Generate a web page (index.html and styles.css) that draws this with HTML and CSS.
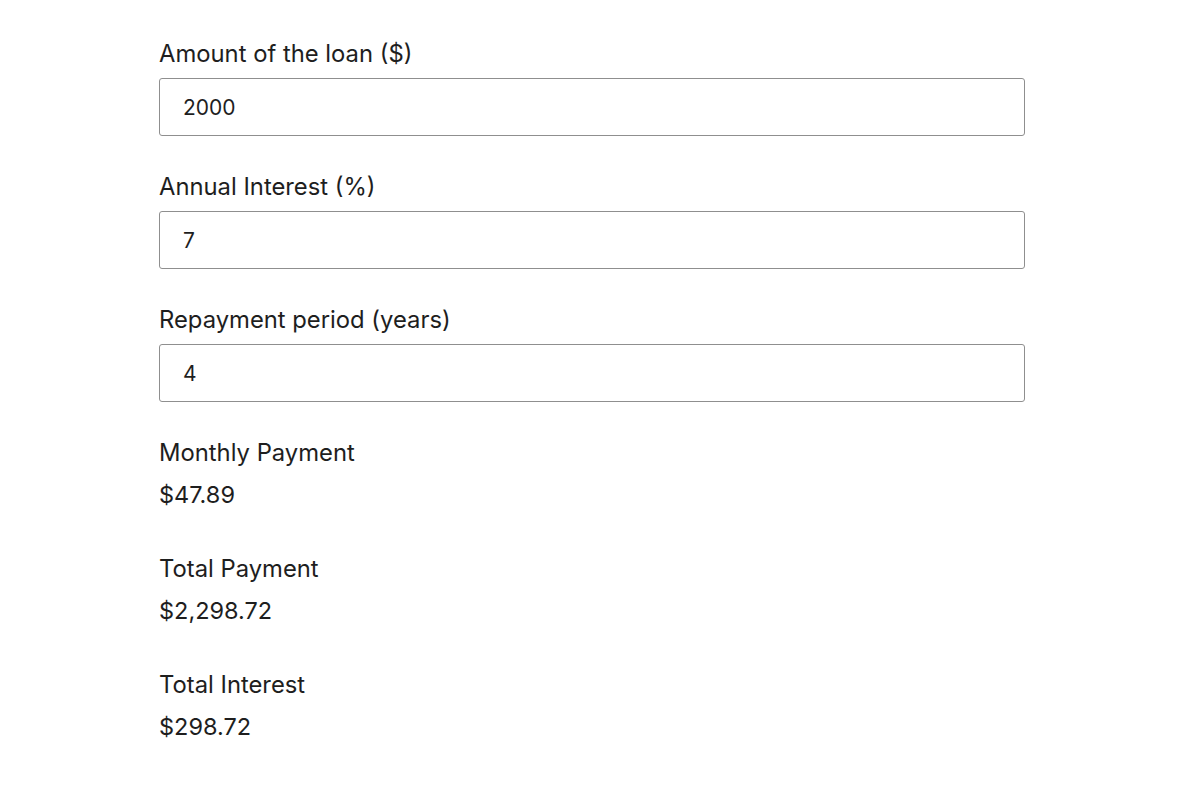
FILE: index.html
```html
<!DOCTYPE html>
<html lang="en">
<head>
<meta charset="utf-8">
<title>Loan Calculator</title>
<link rel="stylesheet" href="styles.css">
</head>
<body>
<main class="calc">
  <form class="fields">
    <div class="field">
      <label class="label" for="amount">Amount of the loan ($)</label>
      <input class="input" id="amount" type="text" value="2000">
    </div>
    <div class="field">
      <label class="label" for="interest">Annual Interest (%)</label>
      <input class="input" id="interest" type="text" value="7">
    </div>
    <div class="field">
      <label class="label" for="years">Repayment period (years)</label>
      <input class="input" id="years" type="text" value="4">
    </div>
  </form>
  <section class="results">
    <div class="result">
      <div class="result-label">Monthly Payment</div>
      <div class="result-value">$47.89</div>
    </div>
    <div class="result">
      <div class="result-label">Total Payment</div>
      <div class="result-value">$2,298.72</div>
    </div>
    <div class="result">
      <div class="result-label">Total Interest</div>
      <div class="result-value">$298.72</div>
    </div>
  </section>
</main>
</body>
</html>
```
FILE: styles.css
```css
* { box-sizing: border-box; }
html, body { margin: 0; padding: 0; background: #ffffff; }
body {
  font-family: Inter, "Noto Sans", sans-serif;
  color: #1e1e1e;
}
.calc {
  width: 866px;
  margin-left: 159px;
  padding-top: 41px;
}
.fields {
  display: flex;
  flex-direction: column;
  gap: 38px;
}
.field {
  display: flex;
  flex-direction: column;
  gap: 11px;
}
.label {
  font-size: 23.8px;
  line-height: 26px;
}
.input {
  height: 58px;
  width: 100%;
  border: 1px solid #8f8f8f;
  border-radius: 3px;
  padding: 0 0 0 23px;
  font-family: inherit;
  font-size: 21px;
  color: #1e1e1e;
  background: #fff;
  outline: none;
}
.results {
  margin-top: 38px;
  display: flex;
  flex-direction: column;
  gap: 48px;
}
.result {
  display: flex;
  flex-direction: column;
  gap: 16px;
}
.result-label {
  font-size: 23.8px;
  line-height: 26px;
}
.result-value {
  font-size: 23.5px;
  line-height: 26px;
}
```
